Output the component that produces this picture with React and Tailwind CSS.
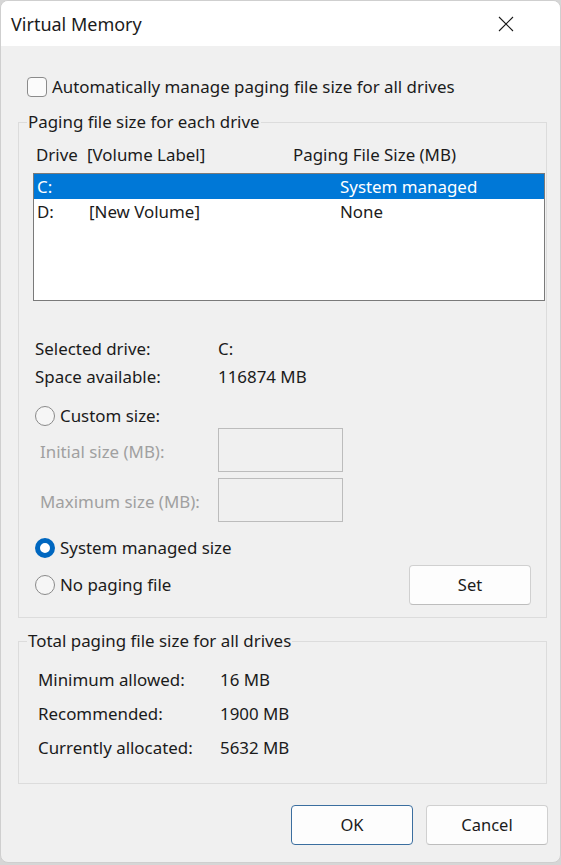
import React from "react";

const font = { fontFamily: '"Noto Sans", "Open Sans", sans-serif' };

function Radio({ checked }) {
  if (checked) {
    return (
      <span className="box-border w-[20px] h-[20px] rounded-full border-[5px] border-[#0067c0] bg-white shrink-0" />
    );
  }
  return (
    <span className="box-border w-[20px] h-[20px] rounded-full border border-[#8a8a8a] bg-[#f6f6f6] shrink-0" />
  );
}

function Button({ children, primary, className = "" }) {
  return (
    <div
      className={
        "flex items-center justify-center h-[40px] w-[122px] rounded-[4px] bg-[#fdfdfd] text-[16.5px] text-[#1b1b1b] border " +
        (primary ? "border-[#3b6e9f] " : "border-[#d0d0d0] border-b-[#bdbdbd] ") +
        className
      }
    >
      {children}
    </div>
  );
}

export default function App() {
  return (
    <div className="w-[561px] h-[865px] bg-[#d6d6d6]" style={font}>
      <div className="w-[561px] h-[863px] rounded-[8px] overflow-hidden border border-[#cfcfcf] bg-[#f0f0f0] flex flex-col text-[#1b1b1b]">
        {/* Title bar */}
        <div className="h-[45px] bg-white flex items-center justify-between pl-[10px] pr-[46px] shrink-0">
          <span className="text-[18px] leading-none">Virtual Memory</span>
          <svg width="16" height="16" viewBox="0 0 16 16" className="mt-[1px]">
            <path d="M1 1 L15 15 M15 1 L1 15" stroke="#1b1b1b" strokeWidth="1.1" fill="none" />
          </svg>
        </div>

        {/* Body */}
        <div className="flex flex-col text-[16.9px]">
          <div className="flex items-center h-[20px] mt-[31px] pl-[26px] gap-[5px]">
            <span className="box-border w-[20px] h-[20px] rounded-[4px] border border-[#8b8b8b] bg-[#fbfbfb]" />
            <span>Automatically manage paging file size for all drives</span>
          </div>

          {/* Group 1 */}
          <div className="ml-[17px] w-[529px] mt-[25px] border border-[#dcdcdc] flex flex-col pb-[12px]">
            <div className="-mt-[12px] ml-[8px] px-[1px] h-[22px] leading-[22px] w-fit bg-[#f0f0f0]">
              Paging file size for each drive
            </div>
            <div className="flex h-[22px] items-center mt-[11px] pl-[17px]">
              <span className="w-[51px]">Drive</span>
              <span className="w-[206px]">[Volume Label]</span>
              <span>Paging File Size (MB)</span>
            </div>
            <div className="ml-[14px] mt-[7px] w-[512px] h-[128px] border border-[#7a7a7a] bg-white flex flex-col">
              <div className="flex h-[25px] items-center bg-[#0078d7] text-white pl-[3px]">
                <span className="w-[303px]">C:</span>
                <span>System managed</span>
              </div>
              <div className="flex h-[25px] items-center pl-[3px]">
                <span className="w-[52px]">D:</span>
                <span className="w-[251px]">[New Volume]</span>
                <span>None</span>
              </div>
            </div>

            <div className="flex flex-col mt-[34px] pl-[16px]">
              <div className="flex h-[28px] items-center">
                <span className="w-[183px]">Selected drive:</span>
                <span>C:</span>
              </div>
              <div className="flex h-[28px] items-center">
                <span className="w-[183px]">Space available:</span>
                <span>116874 MB</span>
              </div>
            </div>

            <div className="flex h-[24px] items-center mt-[13px] pl-[16px] gap-[5px]">
              <Radio />
              <span>Custom size:</span>
            </div>
            <div className="flex flex-col gap-[6px] pl-[21px]">
              <div className="flex h-[44px] items-center">
                <span className="w-[178px] text-[#a0a0a0] pt-[3px]">Initial size (MB):</span>
                <span className="box-border w-[125px] h-[44px] border border-[#bcbcbc] bg-[#f0f0f0]" />
              </div>
              <div className="flex h-[44px] items-center">
                <span className="w-[178px] text-[#a0a0a0] pt-[3px]">Maximum size (MB):</span>
                <span className="box-border w-[125px] h-[44px] border border-[#bcbcbc] bg-[#f0f0f0]" />
              </div>
            </div>

            <div className="flex h-[24px] items-center mt-[14px] pl-[16px] gap-[5px]">
              <Radio checked />
              <span>System managed size</span>
            </div>
            <div className="flex h-[40px] items-center justify-between mt-[5px] pl-[16px] pr-[15px]">
              <div className="flex items-center gap-[5px]">
                <Radio />
                <span>No paging file</span>
              </div>
              <Button>Set</Button>
            </div>
          </div>

          {/* Group 2 */}
          <div className="ml-[17px] w-[529px] mt-[23px] border border-[#dcdcdc] flex flex-col pb-[18px]">
            <div className="-mt-[12px] ml-[8px] px-[1px] h-[22px] leading-[22px] w-fit bg-[#f0f0f0]">
              Total paging file size for all drives
            </div>
            <div className="flex flex-col mt-[11px] pl-[19px]">
              <div className="flex h-[34px] items-center">
                <span className="w-[182px]">Minimum allowed:</span>
                <span>16 MB</span>
              </div>
              <div className="flex h-[34px] items-center">
                <span className="w-[182px]">Recommended:</span>
                <span>1900 MB</span>
              </div>
              <div className="flex h-[34px] items-center">
                <span className="w-[182px]">Currently allocated:</span>
                <span>5632 MB</span>
              </div>
            </div>
          </div>

          <div className="flex justify-end gap-[13px] mt-[21px] pr-[12px]">
            <Button primary>OK</Button>
            <Button>Cancel</Button>
          </div>
        </div>
      </div>
    </div>
  );
}
